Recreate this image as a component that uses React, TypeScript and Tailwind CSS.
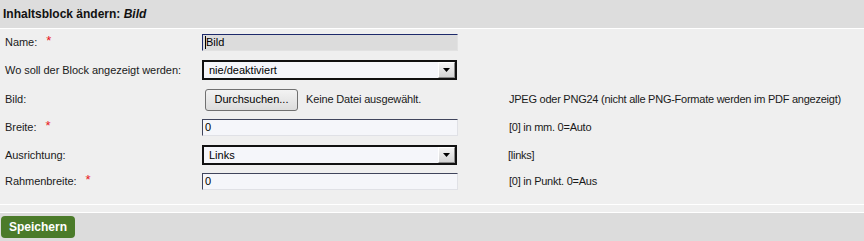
import React from "react";

const font = { fontFamily: '"Liberation Sans", Arial, sans-serif' };

function Label({ text, req }: { text: string; req?: boolean }) {
  return (
    <div className="w-[202px] shrink-0 pl-[5px] flex items-center text-[11px] text-[#1a1a1a] whitespace-nowrap tracking-[-0.05px]">
      <span>{text}</span>
      {req && <span className="ml-[9px] text-[#e8141c] text-[13px] -mt-[4px]">*</span>}
    </div>
  );
}

function TextInput({ value, disabled, caret }: { value: string; disabled?: boolean; caret?: boolean }) {
  return (
    <div
      className={
        "w-[256px] shrink-0 h-[17px] flex items-center pl-[2px] text-[11px] text-black border-t border-l border-r border-b " +
        (disabled
          ? "bg-[#dcdcdc] border-t-[#1d2a6b] border-l-[#1d2a6b] border-r-[#e2e2e2] border-b-[#e2e2e2]"
          : "bg-[#f5f6fa] border-t-[#40455c] border-l-[#40455c] border-r-[#e0e1e6] border-b-[#e0e1e6]")
      }
    >
      {caret && <span className="w-[1px] h-[13px] bg-black" />}
      <span>{value}</span>
    </div>
  );
}

function Select({ value }: { value: string }) {
  return (
    <div className="w-[255px] shrink-0 h-[20px] border-2 border-[#111] bg-[#f5f6fa] flex items-center justify-between">
      <span className="pl-[5px] text-[11px] text-black">{value}</span>
      <div className="w-[17px] h-[16px] bg-gradient-to-b from-[#f4f4f4] to-[#d4d4d4] border border-t-[#ffffff] border-l-[#ffffff] border-r-[#8a8a8a] border-b-[#8a8a8a] flex items-center justify-center">
        <svg width="7" height="4" viewBox="0 0 7 4">
          <polygon points="0,0 7,0 3.5,4" fill="#000" />
        </svg>
      </div>
    </div>
  );
}

function Note({ text }: { text: string }) {
  return <div className="ml-[51px] shrink-0 whitespace-nowrap text-[11px] text-[#1a1a1a] tracking-[-0.25px]">{text}</div>;
}

export default function App() {
  return (
    <div className="w-[864px] h-[241px] bg-[#efefef] flex flex-col overflow-hidden" style={font}>
      <div className="h-[28px] shrink-0 bg-[#dddddd] flex items-center pl-[3px] text-[12px] font-bold text-[#111] border-b border-white box-content">
        <span>Inhaltsblock ändern:&nbsp;</span>
        <span className="italic">Bild</span>
      </div>

      <div className="flex flex-col shrink-0">
        <div className="h-[27px] flex items-center">
          <Label text="Name:" req />
          <TextInput value="Bild" disabled caret />
        </div>
        <div className="h-[28px] flex items-center">
          <Label text="Wo soll der Block angezeigt werden:" />
          <Select value="nie/deaktiviert" />
        </div>
        <div className="h-[31px] flex items-center">
          <Label text="Bild:" />
          <div className="w-[307px] shrink-0 flex items-center">
            <div className="ml-[3px] w-[93px] h-[22px] rounded-[3px] border border-[#707070] bg-gradient-to-b from-[#f3f3f3] to-[#dcdcdc] flex items-center justify-center text-[11px] text-black">
              Durchsuchen...
            </div>
            <span className="ml-[8px] text-[11px] text-[#1a1a1a] whitespace-nowrap tracking-[-0.15px]">Keine Datei ausgewählt.</span>
          </div>
          <div className="text-[11px] text-[#1a1a1a] whitespace-nowrap tracking-[-0.25px]">JPEG oder PNG24 (nicht alle PNG-Formate werden im PDF angezeigt)</div>
        </div>
        <div className="h-[25px] flex items-center">
          <Label text="Breite:" req />
          <TextInput value="0" />
          <Note text="[0] in mm. 0=Auto" />
        </div>
        <div className="h-[30px] flex items-center">
          <Label text="Ausrichtung:" />
          <Select value="Links" />
          <Note text="[links]" />
        </div>
        <div className="h-[23px] flex items-center">
          <Label text="Rahmenbreite:" req />
          <TextInput value="0" />
          <Note text="[0] in Punkt. 0=Aus" />
        </div>
      </div>

      <div className="mt-[11px] h-[1px] shrink-0 bg-white" />
      <div className="h-[7px] shrink-0 bg-[#efefef]" />
      <div className="h-[1px] shrink-0 bg-white" />
      <div className="flex-1 bg-[#dcdcdc] flex items-center pl-[1px]">
        <div className="w-[74px] h-[22px] rounded-[4px] bg-[#4b7b2a] flex items-center justify-center text-[12px] font-bold text-white">
          Speichern
        </div>
      </div>
    </div>
  );
}
